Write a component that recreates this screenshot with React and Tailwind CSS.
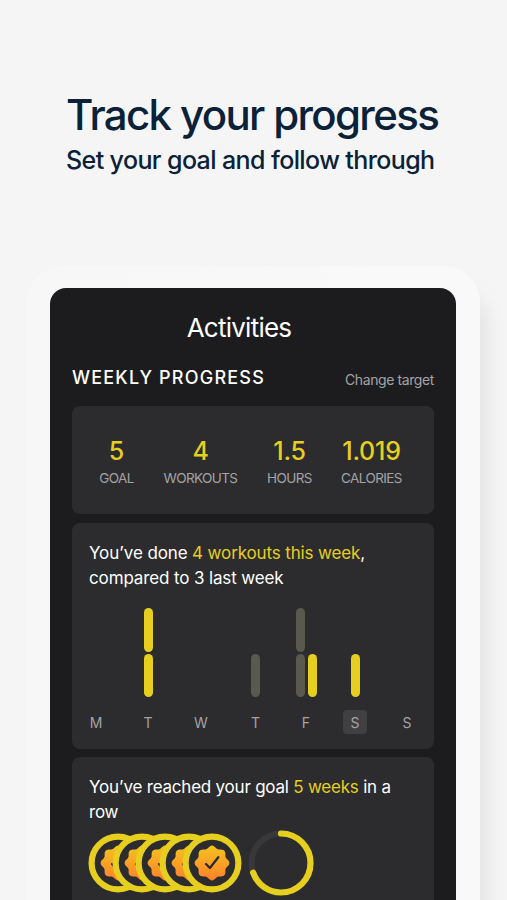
import clsx from 'clsx'

const STATS = [
  { value: '5', label: 'GOAL', width: 'w-[59px]' },
  { value: '4', label: 'WORKOUTS', width: 'w-[109px]' },
  { value: '1.5', label: 'HOURS', width: 'w-[69px]' },
  { value: '1.019', label: 'CALORIES', width: 'w-[95px]' },
]

const DAYS = [
  { label: 'M', last: 0, current: 0 },
  { label: 'T', last: 0, current: 2 },
  { label: 'W', last: 0, current: 0 },
  { label: 'T', last: 1, current: 0 },
  { label: 'F', last: 2, current: 1 },
  { label: 'S', last: 0, current: 1, today: true },
  { label: 'S', last: 0, current: 0 },
]

// eight lobed seal around the origin
const SEAL = Array.from({ length: 96 }, (_, i) => {
  const a = (i / 96) * Math.PI * 2
  const r = 16.1 + 1.3 * Math.cos(8 * a)
  return `${(r * Math.cos(a)).toFixed(2)},${(r * Math.sin(a)).toFixed(2)}`
}).join(' ')

function Bars({ count, color }) {
  if (!count) return null
  return (
    <div className="flex flex-col justify-end gap-[2px]">
      {Array.from({ length: count }, (_, i) => (
        <div key={i} className={clsx('h-[43.5px] w-[9px] rounded-full', color)} />
      ))}
    </div>
  )
}

function Badge() {
  return (
    <svg viewBox="-30 -30 60 60" className="-mr-[36.4px] size-[60px] shrink-0">
      <defs>
        <linearGradient id="seal" x1="0" y1="0" x2="0" y2="1">
          <stop offset="0" stopColor="#f3c31e" />
          <stop offset="1" stopColor="#ff812b" />
        </linearGradient>
      </defs>
      <circle r="26.4" fill="#2c2c2e" stroke="#e6cf1f" strokeWidth="6.2" />
      <polygon points={SEAL} fill="url(#seal)" />
      <path d="M-6 1 L-2.1 5 L6.3 -5.8" fill="none" stroke="#2c2c2e" strokeWidth="2.3" strokeLinecap="round" strokeLinejoin="round" />
    </svg>
  )
}

function GoalRing() {
  return (
    <svg viewBox="-33 -33 66 66" className="ml-[42px] size-[66px] shrink-0">
      <circle r="29.5" fill="none" stroke="#38383a" strokeWidth="6" />
      <circle
        r="29.5"
        fill="none"
        stroke="#e6cf1f"
        strokeWidth="6.2"
        strokeLinecap="round"
        pathLength="360"
        strokeDasharray="251 360"
        transform="rotate(-90)"
      />
    </svg>
  )
}

export default function App() {
  return (
    <div className="h-[900px] w-[507px] overflow-hidden bg-[#f5f5f5] font-['Inter','Liberation_Sans',sans-serif]">
      <header className="h-[266px] pt-[90px] pl-[66px] whitespace-nowrap text-[#0a2138]">
        <h1 className="text-[42px] leading-[50px] font-medium tracking-[-1.65px]">Track your progress</h1>
        <p className="text-[25px] leading-[40px] font-medium tracking-[-0.6px]">Set your goal and follow through</p>
      </header>

      <div className="ml-[27px] h-[700px] w-[453px] rounded-[36px] bg-linear-to-r from-[#f7f7f7] to-[#f9f9f9] px-[23px] pt-[22px] shadow-[10px_22px_20px_-2px_rgba(0,0,0,0.07)]">
        <main className="h-[700px] w-[406px] rounded-t-[16px] bg-[#1c1c1e] px-[22px] pt-[22px] text-white">
          <h2 className="h-[36px] pr-[28px] text-center text-[26px] leading-[36px] tracking-[-0.75px]">Activities</h2>

          <div className="mt-[20px] flex h-[24px] items-center justify-between whitespace-nowrap">
            <h3 className="text-[18px] leading-[24px] font-medium tracking-[1.2px]">WEEKLY PROGRESS</h3>
            <button className="pt-[4px] text-[14px] leading-[20px] tracking-[-0.4px] text-[#a3a3a5]">Change target</button>
          </div>

          <section className="mt-[16px] flex h-[108px] rounded-[8px] bg-[#2c2c2e] pt-[29px] pl-[15px]">
            {STATS.map(s => (
              <div key={s.label} className={clsx('flex flex-col items-center whitespace-nowrap', s.width)}>
                <span className="text-[25px] leading-[32px] font-medium tracking-[-0.2px] text-[#e6cf1f]">{s.value}</span>
                <span className="mt-[1px] text-[13.5px] leading-[20px] tracking-[-0.6px] text-[#a3a3a5]">{s.label}</span>
              </div>
            ))}
          </section>

          <section className="mt-[9px] h-[226px] rounded-[8px] bg-[#2c2c2e] pt-[18px]">
            <p className="pl-[17px] text-[17px] leading-[25px] tracking-[-0.13px] whitespace-nowrap">
              You’ve done <span className="text-[#e6cf1f]">4 workouts this week</span>,<br />
              compared to 3 last week
            </p>
            <div className="mt-[17px] grid grid-cols-[48px_56px_50px_59px_42px_56px_48px]">
              {DAYS.map((d, i) => (
                <div key={i} className="flex flex-col items-center">
                  <div className="flex h-[89px] items-end gap-[3px]">
                    <Bars count={d.last} color="bg-[#5a594d]" />
                    <Bars count={d.current} color="bg-[#e6cf1f]" />
                  </div>
                  <span
                    className={clsx(
                      'mt-[13px] flex size-[24px] items-center justify-center rounded-[4px] text-[14px] text-[#a3a3a5]',
                      d.today && 'bg-[#404042]'
                    )}
                  >
                    {d.label}
                  </span>
                </div>
              ))}
            </div>
          </section>

          <section className="mt-[8px] h-[200px] rounded-t-[8px] bg-[#2c2c2e] pt-[18px] pl-[17px]">
            <p className="text-[17px] leading-[25px] tracking-[-0.22px] whitespace-nowrap">
              You’ve reached your goal <span className="text-[#e6cf1f]">5 weeks</span> in a<br />
              row
            </p>
            <div className="mt-[5px] -ml-[1px] flex items-center">
              {[0, 1, 2, 3, 4].map(i => <Badge key={i} />)}
              <GoalRing />
            </div>
          </section>
        </main>
      </div>
    </div>
  )
}
